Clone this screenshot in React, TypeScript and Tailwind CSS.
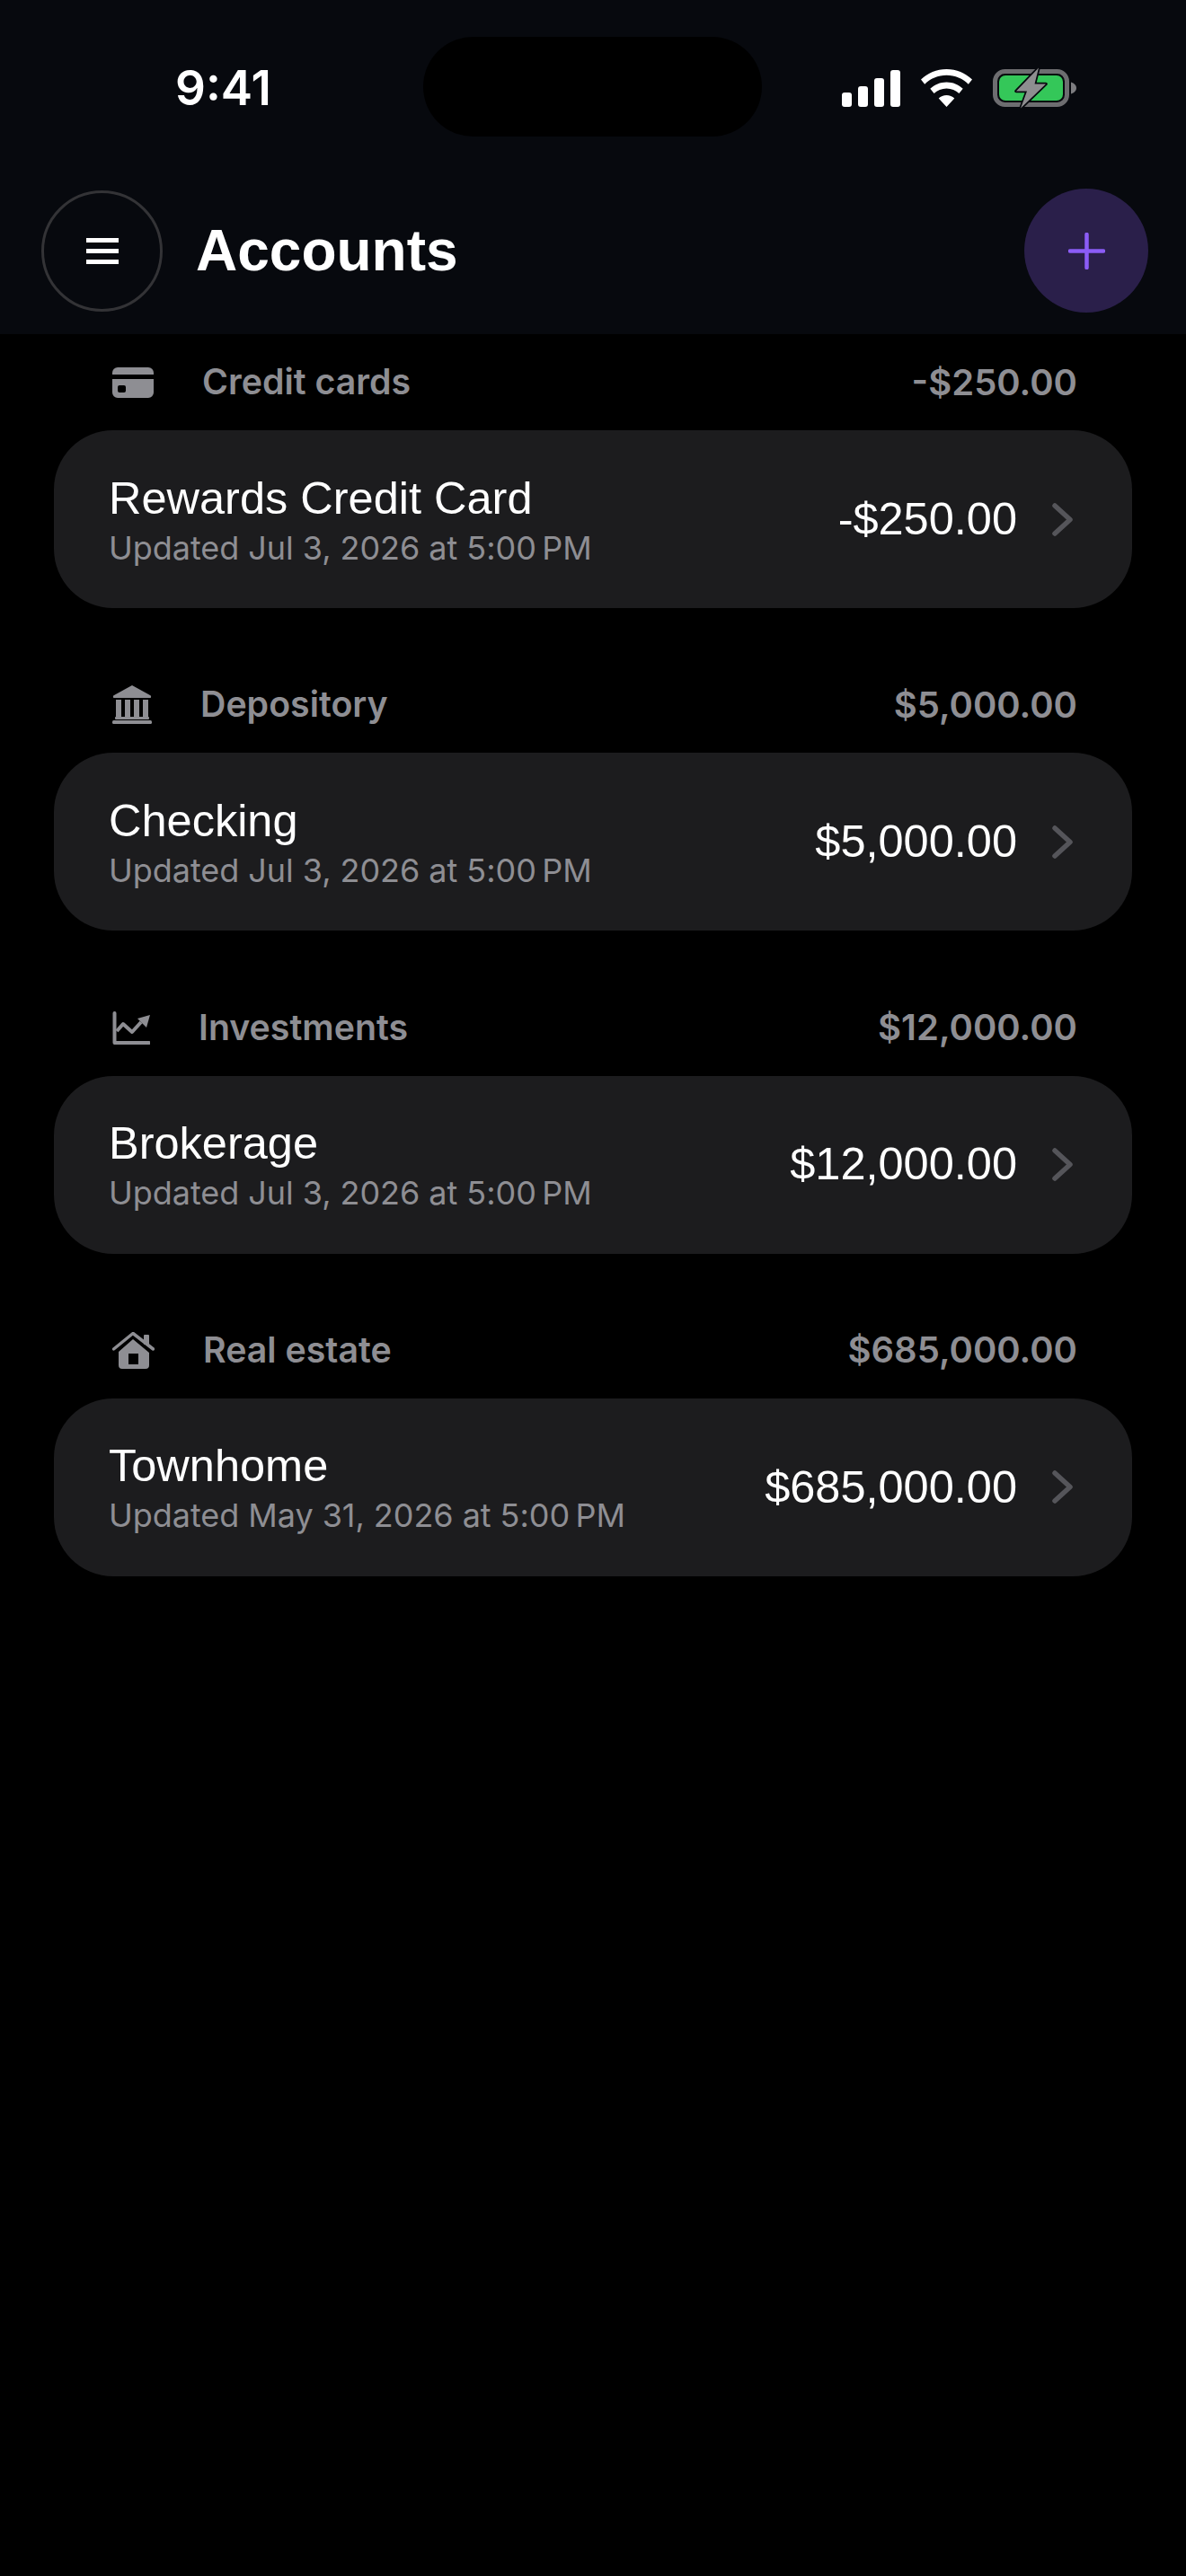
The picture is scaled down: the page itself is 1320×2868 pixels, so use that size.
const UI_FONT = "font-['Inter','Noto_Sans',sans-serif]"

function CardIcon() {
  return (
    <svg width="46" height="34" viewBox="0 0 46 34" fill="#8e8e93">
      <path d="M0 8V6a6 6 0 0 1 6-6h34a6 6 0 0 1 6 6v2H0z" />
      <path fillRule="evenodd" d="M0 13h46v15a6 6 0 0 1-6 6H6a6 6 0 0 1-6-6V13zm8 7a2 2 0 0 0-2 2v4a2 2 0 0 0 2 2h5a2 2 0 0 0 2-2v-4a2 2 0 0 0-2-2H8z" />
    </svg>
  )
}

function BankIcon() {
  return (
    <svg width="44" height="43" viewBox="0 0 44 43" fill="#8e8e93">
      <path d="M22 0l20 11a1.5 1.5 0 0 1-.8 3H2.8A1.5 1.5 0 0 1 2 11L22 0z" />
      <rect x="4" y="16" width="6" height="21" />
      <rect x="14" y="16" width="6" height="21" />
      <rect x="24" y="16" width="6" height="21" />
      <rect x="34" y="16" width="6" height="21" />
      <rect x="3" y="35" width="38" height="3" rx="1" />
      <rect x="0" y="39" width="44" height="4" rx="1.5" />
    </svg>
  )
}

function ChartIcon() {
  return (
    <svg width="42" height="37" viewBox="0 0 42 37" fill="none">
      <path d="M2.500 2v33H41" stroke="#8e8e93" strokeWidth="4" strokeLinecap="round" strokeLinejoin="round" />
      <path d="M5 22l7-8 10 9 10-11" stroke="#8e8e93" strokeWidth="4" strokeLinejoin="round" />
      <path d="M28 8l14-4-4 14z" fill="#8e8e93" />
    </svg>
  )
}

function HouseIcon() {
  return (
    <svg width="47" height="41" viewBox="0 0 47 41" fill="none">
      <path d="M1.500 19L23 1.500 45.500 19" stroke="#8e8e93" strokeWidth="3.500" strokeLinecap="round" strokeLinejoin="round" />
      <rect x="35" y="3" width="6" height="11" rx="1" fill="#8e8e93" />
      <path fillRule="evenodd" fill="#8e8e93" d="M23 8L41 23v14a4 4 0 0 1-4 4H11a4 4 0 0 1-4-4V22L23 8zM18 24v12h11V24H18z" />
    </svg>
  )
}

function StatusIcons() {
  return (
    <div className="flex items-center">
      <svg width="65" height="41" viewBox="0 0 65 41" fill="#fff">
        <rect x="0" y="25" width="11" height="16" rx="3" />
        <rect x="18" y="18" width="11" height="23" rx="3" />
        <rect x="36" y="9" width="11" height="32" rx="3" />
        <rect x="54" y="0" width="11" height="41" rx="3" />
      </svg>
      <svg className="ml-[23px]" width="57" height="42" viewBox="0 0 57 42" fill="#fff">
        <path d="M28.5 0C39.5 0 49.5 4.4 57 11.5l-4.2 5.2C46.6 10.6 38 6.8 28.5 6.8S10.400 10.600 4.200 16.700L0 11.500C7.500 4.400 17.500 0 28.500 0z" />
        <path d="M28.500 14.500c7 0 13.400 2.800 18.200 7.300l-4.300 5.200c-3.600-3.500-8.500-5.600-13.900-5.600s-10.300 2.100-13.900 5.600l-4.300-5.200c4.800-4.500 11.200-7.300 18.200-7.300z" />
        <path d="M28.500 29c3.400 0 6.500 1.300 8.800 3.400L28.500 42l-8.800-9.600c2.300-2.100 5.400-3.400 8.800-3.400z" />
      </svg>
      <svg className="ml-[23px]" width="94" height="46" viewBox="0 0 94 46">
        <rect x="2.500" y="4.500" width="80" height="37" rx="11" fill="none" stroke="#6d6d70" strokeWidth="5" />
        <rect x="7" y="9" width="71" height="28" rx="7" fill="#34c759" />
        <path d="M87 16.500c3.500 1 6 3.500 6 6.500s-2.500 5.500-6 6.500z" fill="#7d7d80" />
        <path d="M51 0.500L26 26.500h12L31 45.500 59 18.500H46.500L51 0.500z" fill="#8e8e90" stroke="#07090e" strokeWidth="3.500" strokeLinejoin="round" paintOrder="stroke" />
      </svg>
    </div>
  )
}

type Section = {
  name: string
  total: string
  icon: React.ReactNode
  account: string
  updated: string
}

const sections: Section[] = [
  { name: "Credit cards", total: "-$250.00", icon: <CardIcon />, account: "Rewards Credit Card", updated: "Updated Jul 3, 2026 at 5:00\u202FPM" },
  { name: "Depository", total: "$5,000.00", icon: <BankIcon />, account: "Checking", updated: "Updated Jul 3, 2026 at 5:00\u202FPM" },
  { name: "Investments", total: "$12,000.00", icon: <ChartIcon />, account: "Brokerage", updated: "Updated Jul 3, 2026 at 5:00\u202FPM" },
  { name: "Real estate", total: "$685,000.00", icon: <HouseIcon />, account: "Townhome", updated: "Updated May 31, 2026 at 5:00\u202FPM" },
]

export default function App() {
  return (
    <div className="min-h-[2868px] bg-black text-white">
      {/* Header */}
      <header className="relative h-[372px] bg-[#07090e]">
        <div className="absolute left-[471px] top-[41px] h-[111px] w-[377px] rounded-full bg-black" />
        <div className="flex items-center justify-between pl-[195px] pr-[121px] pt-[75px]">
          <span className={`${UI_FONT} text-[53px] font-semibold leading-[42px]`}>9:41</span>
          <StatusIcons />
        </div>
        <div className="mt-[89px] flex items-center pl-[46px] pr-[42px]">
          <button className="flex h-[135px] w-[135px] shrink-0 items-center justify-center rounded-full border-[3px] border-[#333336]">
            <span className="flex w-[36px] flex-col gap-[7px]">
              <span className="h-[5px] bg-white" />
              <span className="h-[5px] bg-white" />
              <span className="h-[5px] bg-white" />
            </span>
          </button>
          <h1 className="ml-[37px] font-['Liberation_Sans',Arial,sans-serif] text-[64px] font-bold leading-none">Accounts</h1>
          <button className="ml-auto flex h-[138px] w-[138px] items-center justify-center rounded-full bg-[#2a1f4a]">
            <svg width="41" height="41" viewBox="0 0 41 41" fill="none" stroke="#8b5cf6" strokeWidth="4.500" strokeLinecap="round">
              <path d="M20.500 2v37M2 20.500h37" />
            </svg>
          </button>
        </div>
      </header>

      {/* Account groups */}
      <main className="flex flex-col gap-[54.3px]">
        {sections.map((s) => (
          <section key={s.name}>
            <div className="flex h-[107px] items-center pl-[125px] pr-[121px]">
              {s.icon}
              <span className={`${UI_FONT} ml-[54px] text-[39.3px] font-semibold text-[#8e8e93]`}>{s.name}</span>
              <span className={`${UI_FONT} ml-auto text-[40px] font-semibold text-[#8e8e93]`}>{s.total}</span>
            </div>
            <div className="mx-[60px] flex h-[198px] items-center rounded-[66px] bg-[#1c1c1e] pl-[61px] pr-[66px]">
              <div className="flex flex-col pt-[3px]">
                <span className="font-['Liberation_Sans',Arial,sans-serif] text-[50.5px] leading-[60px]">{s.account}</span>
                <span className={`${UI_FONT} text-[36px] leading-[50px] tracking-[-0.05px] text-[#8e8e93]`}>{s.updated}</span>
              </div>
              <span className="ml-auto font-['Liberation_Sans',Arial,sans-serif] text-[50.5px] leading-none">{s.total}</span>
              <svg className="ml-[39px]" width="23" height="37" viewBox="0 0 23 37" fill="none" stroke="#55555a" strokeWidth="5.500" strokeLinecap="round" strokeLinejoin="round">
                <path d="M3 3l17 15.500L3 34" />
              </svg>
            </div>
          </section>
        ))}
      </main>
    </div>
  )
}
